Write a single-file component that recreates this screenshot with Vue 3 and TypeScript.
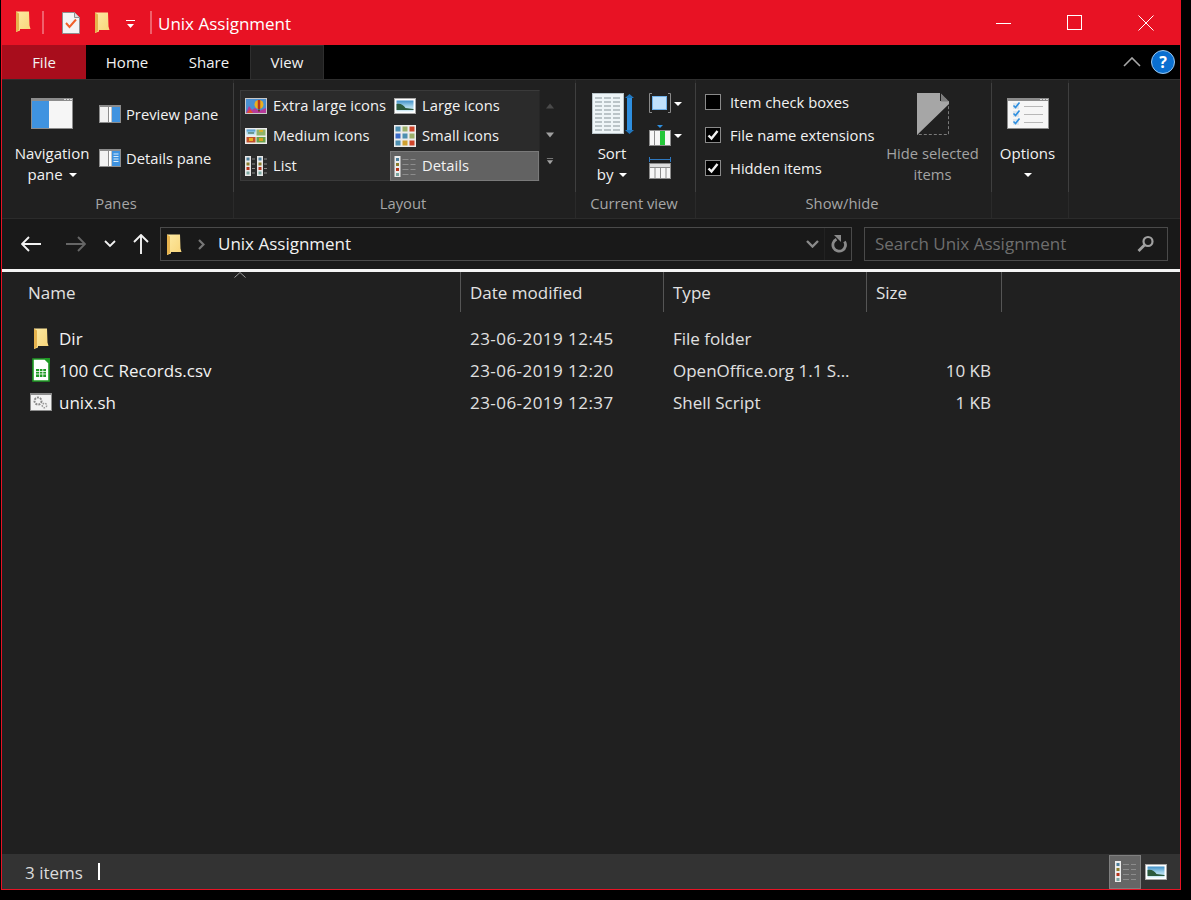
<template>
  <div class="window">
    <svg class="defs" aria-hidden="true">
      <defs>
        <linearGradient id="folder-fill" x1="0" y1="0" x2="1" y2="1">
          <stop offset="0" stop-color="#fdeaa4" />
          <stop offset="1" stop-color="#f8d477" />
        </linearGradient>
        <linearGradient id="sky" x1="0" y1="0" x2="0" y2="1">
          <stop offset="0" stop-color="#3f8fc8" />
          <stop offset="0.5" stop-color="#9fd0e8" />
          <stop offset="1" stop-color="#d8eef7" />
        </linearGradient>
      </defs>
      <symbol id="i-folder" viewBox="0 0 15 21">
        <path d="M0 0.500h13l.5 14 1 3.500H4v1.500L0 21z" fill="url(#folder-fill)" />
        <path d="M0 0.500l3 2V19l-3 2z" fill="#e6b34e" />
      </symbol>
      <symbol id="i-details" viewBox="0 0 21 21">
        <rect x="0" y="0" width="6" height="21" fill="#ececec" />
        <rect x="1.500" y="2" width="3" height="3" fill="#4d7f9b" />
        <rect x="1.500" y="7" width="3" height="3" fill="#8a7d2b" />
        <rect x="1.500" y="12" width="3" height="3" fill="#b5341c" />
        <rect x="1.500" y="17" width="3" height="3" fill="#7aa6a0" />
        <path d="M8 3.500h6M16 3.500h5M8 8.500h6M16 8.500h5M8 13.500h6M16 13.500h5M8 18.500h6M16 18.500h5" stroke="#8c8c8c" />
      </symbol>
      <symbol id="i-list" viewBox="0 0 22 20">
        <rect x="0" y="0" width="6" height="20" fill="#e8e8e8" />
        <rect x="12" y="0" width="6" height="20" fill="#e8e8e8" />
        <path d="M1.500 1.500h3v3h-3zM13.500 1.500h3v3h-3z" fill="#4d7f9b" />
        <path d="M1.500 6.500h3v3h-3zM13.500 6.500h3v3h-3z" fill="#8a7d2b" />
        <path d="M1.500 11h3v3h-3zM13.500 11h3v3h-3z" fill="#b5341c" />
        <path d="M1.500 15.500h3v3h-3zM13.500 15.500h3v3h-3z" fill="#7aa6a0" />
        <path d="M7 3h3M19 3h3M7 8h3M19 8h3M7 12.500h3M19 12.500h3M7 17h3M19 17h3" stroke="#8c8c8c" />
      </symbol>
      <symbol id="i-xl" viewBox="0 0 22 16">
        <rect width="22" height="16" fill="#c8c8c8" />
        <rect x="1" y="1" width="20" height="14" fill="#4a8fd0" />
        <path d="M1 15l3-7 3 4 3-2 4 3 7-3v5z" fill="#b63a9a" />
        <path d="M2 15l3-4 3 4z" fill="#e0502a" />
        <circle cx="14" cy="6.500" r="4.500" fill="#e8b020" />
        <path d="M14 2v9" stroke="#b5341c" stroke-width="2.500" />
        <rect x="13" y="11.500" width="2" height="2" fill="#6a3a1a" />
      </symbol>
      <symbol id="i-large" viewBox="0 0 22 16">
        <rect width="22" height="16" fill="#a8a8a8" />
        <rect x="1" y="1" width="20" height="14" fill="#fff" />
        <rect x="2.500" y="2.500" width="17" height="11" fill="url(#sky)" />
        <path d="M2.500 6c4-1 7 1 9 4l8 1v1H2.500z" fill="#2c5a3c" />
      </symbol>
      <symbol id="i-medium" viewBox="0 0 22 16">
        <rect width="22" height="16" fill="#ececec" />
        <rect x="1.500" y="1.500" width="9" height="6" fill="url(#sky)" />
        <rect x="11.500" y="1.500" width="9" height="6" fill="#8fb36a" />
        <path d="M3 5h6" stroke="#2c5a3c" />
        <path d="M14 3h4" stroke="#d8b030" stroke-width="2" />
        <rect x="1.500" y="9" width="9" height="5.500" fill="#c0502a" />
        <rect x="4" y="10" width="4" height="3" fill="#e8b020" />
        <rect x="11.500" y="9" width="9" height="5.500" fill="#6ba04a" />
        <rect x="14" y="10" width="4" height="3" fill="#d8a020" />
      </symbol>
      <symbol id="i-small" viewBox="0 0 22 22">
        <rect width="22" height="22" fill="#ececec" />
        <path d="M1.500 1.500h5v5h-5z" fill="#4d8fb0" /><path d="M8.500 1.500h5v5h-5z" fill="#9bb06a" /><path d="M15.500 1.500h5v5h-5z" fill="#d0452a" />
        <path d="M1.500 8.500h5v5h-5z" fill="#3a6ac8" /><path d="M8.500 8.500h5v5h-5z" fill="#4d8fb0" /><path d="M15.500 8.500h5v5h-5z" fill="#9bb06a" />
        <path d="M1.500 15.500h5v5h-5z" fill="#4d8fb0" /><path d="M8.500 15.500h5v5h-5z" fill="#d0a030" /><path d="M15.500 15.500h5v5h-5z" fill="#d0452a" />
      </symbol>
      <symbol id="i-preview" viewBox="0 0 22 18">
        <rect width="22" height="18" fill="#8c8c8c" />
        <rect x="1" y="2" width="8" height="15" fill="#f2f2f2" />
        <rect x="10" y="2" width="2.500" height="15" fill="#ffffff" />
        <rect x="13" y="2" width="8" height="15" fill="#3f93e0" />
      </symbol>
      <symbol id="i-detailspane" viewBox="0 0 22 18">
        <rect width="22" height="18" fill="#8c8c8c" />
        <rect x="1" y="2" width="8" height="15" fill="#f2f2f2" />
        <rect x="10" y="2" width="2.500" height="15" fill="#ffffff" />
        <rect x="13" y="2" width="8" height="15" fill="#3f93e0" />
        <path d="M14.500 5h5M14.500 7.500h5M14.500 10h5M14.500 12.500h5" stroke="#d8ecfb" />
      </symbol>
    </svg>

    <header class="titlebar">
      <svg class="qa-folder"><use href="#i-folder" /></svg>
      <span class="qa-sep"></span>
      <svg class="qa-doc" viewBox="0 0 18 22">
        <path d="M0.500 0.500h12l5 5v16H0.500z" fill="#f4f4f4" stroke="#8f8f8f" />
        <path d="M12.500 0.500v5h5" fill="#dcdcdc" stroke="#8f8f8f" />
        <path d="M4 11l3.500 4L14 7.500" fill="none" stroke="#f0602a" stroke-width="2" />
      </svg>
      <svg class="qa-folder second"><use href="#i-folder" /></svg>
      <svg class="qa-drop" viewBox="0 0 11 10">
        <path d="M1 .500h9" stroke="#fff" />
        <path d="M2 4h7l-3.500 4z" fill="#fff" />
      </svg>
      <span class="qa-sep last"></span>
      <span class="title">Unix Assignment</span>
      <div class="controls">
        <svg class="ctl" viewBox="0 0 16 16"><path d="M0 8.500h15" stroke="#fff" /></svg>
        <svg class="ctl" viewBox="0 0 16 16"><rect x="0.500" y="0.500" width="14" height="14" fill="none" stroke="#fff" /></svg>
        <svg class="ctl" viewBox="0 0 16 16"><path d="M0.500 0.500l15 15M15.500 0.500l-15 15" stroke="#fff" /></svg>
      </div>
    </header>

    <nav class="tabs">
      <span class="tab file">File</span>
      <span class="tab">Home</span>
      <span class="tab">Share</span>
      <span class="tab view">View</span>
      <svg class="collapse" viewBox="0 0 18 10"><path d="M1 9l8-8 8 8" fill="none" stroke="#a8a8a8" stroke-width="1.600" /></svg>
      <span class="help">?</span>
    </nav>

    <section class="ribbon">
      <div class="group panes">
        <div class="group-body">
          <div class="big nav-pane">
            <svg class="big-icon wide" viewBox="0 0 42 31">
              <rect width="42" height="31" fill="#8c8c8c" />
              <rect x="1" y="3" width="17" height="27" fill="#3f93e0" />
              <rect x="18" y="3" width="23" height="27" fill="#f6f6f6" />
              <path d="M33 1.500h2M36 1.500h2M39 1.500h2" stroke="#dcdcdc" />
            </svg>
            <span class="big-text">Navigation<br />pane <i class="caret"></i></span>
          </div>
          <div class="pane-list">
            <div class="pane-item"><svg class="pane-icon"><use href="#i-preview" /></svg>Preview pane</div>
            <div class="pane-item"><svg class="pane-icon"><use href="#i-detailspane" /></svg>Details pane</div>
          </div>
        </div>
        <div class="group-label">Panes</div>
      </div>

      <div class="group layout">
        <div class="group-body">
          <div class="gallery">
            <div v-for="item in layouts" :key="item.label" class="gallery-item" :class="{ selected: item.selected }">
              <svg class="gallery-icon" :style="{ height: `${item.h}px` }"><use :href="`#i-${item.icon}`" /></svg>
              <span class="gallery-text">{{ item.label }}</span>
            </div>
          </div>
          <div class="gallery-scroll">
            <svg viewBox="0 0 10 6"><path d="M1 6l4-5 4 5z" fill="#4a4a4a" /></svg>
            <svg viewBox="0 0 10 6"><path d="M1 0l4 5 4-5z" fill="#a0a0a0" /></svg>
            <svg class="more" viewBox="0 0 10 9"><path d="M1 .500h8" stroke="#a0a0a0" /><path d="M1 3l4 5 4-5z" fill="#a0a0a0" /></svg>
          </div>
        </div>
        <div class="group-label">Layout</div>
      </div>

      <div class="group current">
        <div class="group-body">
          <div class="big sort">
            <svg class="big-icon sort-icon" viewBox="0 0 42 42">
              <rect x="0.500" y="0.500" width="31" height="40" fill="#eef5f8" stroke="#b9c4c9" />
              <path d="M3 5h26M3 9h26M3 13h26M3 17h26M3 21h26M3 25h26M3 29h26M3 33h26M3 37h26" stroke="#a9b4b8" stroke-width="1.400" stroke-dasharray="7 2" />
              <rect x="35" y="3" width="5" height="36" fill="#2e8fe0" />
              <path d="M33 5l4.500-4 4.500 4zM33 37l4.500 4 4.500-4z" fill="#2176bd" />
            </svg>
            <span class="big-text">Sort<br />by <i class="caret"></i></span>
          </div>
          <div class="view-tools">
            <div class="tool">
              <svg class="tool-icon" viewBox="0 0 22 22">
                <path d="M3 .500H.500v19H3M19 .500h2.500v19H19" fill="none" stroke="#8a8a8a" />
                <rect x="3.500" y="3.500" width="14" height="13" fill="#bfe0fb" stroke="#6fb0e8" />
              </svg>
              <i class="caret"></i>
            </div>
            <div class="tool">
              <svg class="tool-icon" viewBox="0 0 22 22">
                <path d="M8 0h6l-3 3z" fill="#2e8fe0" />
                <rect y="5" width="22" height="16" fill="#8c8c8c" />
                <rect x="1" y="6" width="20" height="14" fill="#f6f6f6" />
                <path d="M5.500 6v14" stroke="#8c8c8c" />
                <rect x="11" y="6" width="5" height="14" fill="#25c73a" />
              </svg>
              <i class="caret"></i>
            </div>
            <div class="tool">
              <svg class="tool-icon" viewBox="0 0 22 22">
                <path d="M.500 0v5M21.500 0v5M1 2.500h20" stroke="#2e78c0" />
                <rect y="6" width="22" height="16" fill="#8c8c8c" />
                <rect x="1" y="7" width="20" height="3" fill="#dedede" />
                <path d="M1 11h4.500v10H1zM6.500 11H11v10H6.500zM12 11h4.500v10H12zM17.500 11H21v10h-3.500z" fill="#f6f6f6" />
              </svg>
            </div>
          </div>
        </div>
        <div class="group-label">Current view</div>
      </div>

      <div class="group showhide">
        <div class="group-body">
          <div class="checks">
            <label v-for="item in checks" :key="item.label" class="check">
              <span class="box">
                <svg v-if="item.on" viewBox="0 0 14 14"><path d="M2.500 7.500l3 3 6-7.500" fill="none" stroke="#f0f0f0" stroke-width="2.400" /></svg>
              </span>
              {{ item.label }}
            </label>
          </div>
          <div class="big hide">
            <svg class="big-icon hide-icon" viewBox="0 0 32 42">
              <path d="M0.500 41.500V.500h23l8 8v33z" fill="none" stroke="#7a7a7a" stroke-dasharray="3 2" />
              <path d="M0 42V0h23v8h9v3z" fill="#a6a6a6" />
              <path d="M24 0.500l8 8h-8z" fill="#7d7d7d" />
            </svg>
            <span class="big-text muted">Hide selected<br />items</span>
          </div>
        </div>
        <div class="group-label">Show/hide</div>
      </div>

      <div class="group options">
        <div class="group-body">
          <div class="big">
            <svg class="big-icon wide" viewBox="0 0 42 31">
              <rect width="42" height="31" fill="#8c8c8c" />
              <rect x="1" y="3" width="40" height="27" fill="#f6f6f6" />
              <path d="M33 1.500h2M36 1.500h2M39 1.500h2" stroke="#dcdcdc" />
              <path d="M6 5h6v6H6zM6 13h6v6H6zM6 21h6v6H6z" fill="#dfe6ec" />
              <path d="M6.500 7.500l2 2 4-5M6.500 15.500l2 2 4-5M6.500 23.500l2 2 4-5" fill="none" stroke="#2f8fe0" stroke-width="1.600" />
              <path d="M17 8.500h19M17 16.500h19M17 24.500h19" stroke="#b8b8b8" />
            </svg>
            <span class="big-text">Options<br /><i class="caret"></i></span>
          </div>
        </div>
        <div class="group-label"></div>
      </div>
    </section>

    <div class="navbar">
      <svg class="nav-btn back" viewBox="0 0 20 16"><path d="M20 8H1M8 1L1 8l7 7" fill="none" stroke="#f2f2f2" stroke-width="1.900" /></svg>
      <svg class="nav-btn forward" viewBox="0 0 20 16"><path d="M0 8h19M12 1l7 7-7 7" fill="none" stroke="#666" stroke-width="1.900" /></svg>
      <svg class="nav-chev" viewBox="0 0 12 8"><path d="M1 1l5 5 5-5" fill="none" stroke="#f2f2f2" stroke-width="1.800" /></svg>
      <svg class="nav-up" viewBox="0 0 16 20"><path d="M8 20V1M1 8l7-7 7 7" fill="none" stroke="#f2f2f2" stroke-width="1.900" /></svg>
      <div class="address">
        <svg class="addr-folder"><use href="#i-folder" /></svg>
        <svg class="addr-chev" viewBox="0 0 7 11"><path d="M1 1l4.500 4.500L1 10" fill="none" stroke="#777" stroke-width="2.200" /></svg>
        <span class="addr-text">Unix Assignment</span>
        <svg class="addr-drop" viewBox="0 0 13 8"><path d="M1 1l5.500 5.500L12 1" fill="none" stroke="#8a8a8a" stroke-width="2.400" /></svg>
        <span class="addr-split"></span>
        <svg class="addr-refresh" viewBox="0 0 18 18"><path d="M6.500 4.200a6.300 6.300 0 1 0 8 2.300" fill="none" stroke="#8a8a8a" stroke-width="2.800" /><path d="M4 0h7v7z" fill="#8a8a8a" /></svg>
      </div>
      <div class="search">
        <span class="search-text">Search Unix Assignment</span>
        <svg class="search-icon" viewBox="0 0 18 18"><circle cx="11" cy="6.500" r="4.500" fill="none" stroke="#a0a0a0" stroke-width="2.200" /><path d="M7.500 10l-6 6" stroke="#a0a0a0" stroke-width="2.800" /></svg>
      </div>
    </div>

    <main class="files">
      <div class="file-header">
        <div class="col-head name-head">Name<svg class="sort-caret" viewBox="0 0 12 6"><path d="M.500 5.500L6 .500l5.500 5" fill="none" stroke="#9a9a9a" /></svg></div>
        <div class="col-head">Date modified</div>
        <div class="col-head">Type</div>
        <div class="col-head">Size</div>
      </div>
      <div class="file-rows">
        <div v-for="row in files" :key="row.name" class="file-row">
          <div class="cell name-cell">
            <span class="file-icon">
              <svg v-if="row.kind === 'folder'" class="row-folder"><use href="#i-folder" /></svg>
              <svg v-else-if="row.kind === 'sheet'" class="row-sheet" viewBox="0 0 18 24">
                <path d="M1 1h12l4 4v18H1z" fill="#fff" stroke="#1f9b24" stroke-width="1.600" />
                <path d="M12 0h6v6z" fill="#1f9b24" />
                <path d="M4 11h10v8H4z" fill="#1f9b24" />
                <path d="M4 13.500h10M4 16h10M7.500 11v8M10.800 11v8" stroke="#fff" stroke-width=".8" />
              </svg>
              <svg v-else class="row-script" viewBox="0 0 22 18">
                <rect width="22" height="18" fill="#8c8c8c" />
                <rect x="1" y="2" width="20" height="15" fill="#f2f2f2" />
                <circle cx="8" cy="8" r="3.500" fill="none" stroke="#8a8a8a" stroke-width="2" stroke-dasharray="2 1" />
                <circle cx="14.500" cy="12.500" r="2.200" fill="none" stroke="#9a9a9a" stroke-width="1.500" stroke-dasharray="1.500 1" />
              </svg>
            </span>
            {{ row.name }}
          </div>
          <div class="cell date">{{ row.date }}</div>
          <div class="cell">{{ row.type }}</div>
          <div class="cell size">{{ row.size }}</div>
        </div>
      </div>
    </main>

    <footer class="statusbar">
      <span class="count">3 items</span>
      <span class="cursor"></span>
      <span class="view-toggle active"><svg><use href="#i-details" /></svg></span>
      <svg class="thumb-toggle"><use href="#i-large" /></svg>
    </footer>
  </div>
</template>

<script setup lang="ts">
interface FileRow {
  name: string;
  date: string;
  type: string;
  size: string;
  kind: 'folder' | 'sheet' | 'script';
}

const layouts = [
  { label: 'Extra large icons', icon: 'xl', h: 16 },
  { label: 'Large icons', icon: 'large', h: 16 },
  { label: 'Medium icons', icon: 'medium', h: 16 },
  { label: 'Small icons', icon: 'small', h: 22 },
  { label: 'List', icon: 'list', h: 20 },
  { label: 'Details', icon: 'details', h: 21, selected: true },
];

const checks = [
  { label: 'Item check boxes', on: false },
  { label: 'File name extensions', on: true },
  { label: 'Hidden items', on: true },
];

const files: FileRow[] = [
  { name: 'Dir', date: '23-06-2019 12:45', type: 'File folder', size: '', kind: 'folder' },
  { name: '100 CC Records.csv', date: '23-06-2019 12:20', type: 'OpenOffice.org 1.1 S...', size: '10 KB', kind: 'sheet' },
  { name: 'unix.sh', date: '23-06-2019 12:37', type: 'Shell Script', size: '1 KB', kind: 'script' },
];
</script>

<style>
html,
body {
  background: #000;
}
</style>

<style scoped>
.window {
  box-sizing: border-box;
  width: 1180px;
  height: 890px;
  margin-left: 1px;
  border-left: 1px solid #e81224;
  border-right: 1px solid #e81224;
  border-bottom: 1px solid #e81224;
  display: flex;
  flex-direction: column;
  background: #202020;
  color: #f2f2f2;
  font-family: "Open Sans", "Noto Sans", sans-serif;
  font-size: 14.750px;
  overflow: hidden;
}

.defs {
  position: absolute;
  width: 0;
  height: 0;
}

svg {
  display: block;
  flex: none;
}

/* title bar */
.titlebar {
  height: 45px;
  flex: none;
  display: flex;
  align-items: center;
  padding-left: 14px;
  background: #e81224;
  color: #fff;
}

.qa-folder {
  width: 15px;
  height: 21px;
  margin-bottom: 2px;
}

.qa-folder.second {
  margin-left: 15px;
  margin-bottom: 0;
}

.qa-sep {
  width: 2px;
  height: 23px;
  margin-left: 11px;
  background: #f0606c;
}

.qa-sep.last {
  margin-left: 14px;
}

.qa-doc {
  width: 18px;
  height: 22px;
  margin-left: 18px;
}

.qa-drop {
  width: 11px;
  height: 10px;
  margin-left: 15px;
  margin-top: 4px;
}

.title {
  margin-left: 6px;
  padding-top: 1px;
  font-size: 17px;
}

.controls {
  margin-left: auto;
  margin-right: 26px;
  display: flex;
  gap: 55px;
}

.ctl {
  width: 16px;
  height: 16px;
}

/* tabs */
.tabs {
  height: 34px;
  flex: none;
  display: flex;
  align-items: center;
  background: #000;
  font-size: 15px;
}

.tab {
  width: 82px;
  height: 100%;
  display: flex;
  align-items: center;
  justify-content: center;
}

.tab.file {
  width: 84px;
  background: #a80d1c;
}

.tab.view {
  box-sizing: border-box;
  width: 74px;
  padding-bottom: 1px;
  background: #202020;
  border: 1px solid #2e2e2e;
  border-bottom: 0;
}

.collapse {
  width: 18px;
  height: 10px;
  margin-left: auto;
}

.help {
  width: 22px;
  height: 22px;
  margin: 0 5px 0 10px;
  border: 1px solid #9cc8ee;
  border-radius: 50%;
  background: #0a6fd0;
  color: #fff;
  font-weight: 700;
  font-size: 16px;
  line-height: 22px;
  text-align: center;
}

/* ribbon */
.ribbon {
  height: 140px;
  flex: none;
  display: flex;
  box-sizing: border-box;
  border-top: 1px solid #2e2e2e;
  border-bottom: 1px solid #2b2b2b;
  background: #202020;
}

.group {
  position: relative;
  display: flex;
  flex-direction: column;
  flex: none;
  border-right: 1px solid #2a2a2a;
  box-sizing: border-box;
}

.group::after {
  content: "";
  position: absolute;
  top: 3px;
  right: -1px;
  width: 1px;
  height: 109px;
  background: #3f3f3f;
}

.group-body {
  box-sizing: border-box;
  height: 112px;
  display: flex;
}

.group-label {
  flex: 1;
  display: flex;
  align-items: center;
  justify-content: center;
  color: #a6a6a6;
  font-size: 14.750px;
  padding: 0 3px 5px 0;
}

.panes { width: 232px; }
.layout { width: 342px; }
.current { width: 120px; }
.showhide { width: 296px; }
.options { width: 77px; }

.big {
  display: flex;
  flex-direction: column;
  align-items: center;
}

.big-text {
  text-align: center;
  line-height: 21px;
  font-size: 15px;
  white-space: nowrap;
}

.big-text.muted {
  color: #a3a3a3;
  font-size: 14.750px;
}

.big-icon.wide {
  width: 42px;
  height: 31px;
  margin: 18px 0 14px;
}

.caret {
  display: inline-block;
  width: 0;
  height: 0;
  margin-left: 2px;
  vertical-align: 3px;
  border-left: 4px solid transparent;
  border-right: 4px solid transparent;
  border-top: 4px solid #fff;
}

.nav-pane {
  width: 100px;
}

.pane-list {
  display: flex;
  flex-direction: column;
  gap: 24px;
  margin: 24px 0 0 -3px;
}

.pane-item {
  height: 20px;
  display: flex;
  align-items: center;
  gap: 5px;
  white-space: nowrap;
}

.pane-icon {
  width: 22px;
  height: 18px;
}

.layout .group-body {
  padding: 10px 0 0 6px;
}

.gallery {
  box-sizing: border-box;
  width: 300px;
  height: 91px;
  display: grid;
  grid-template-columns: 149px 149px;
  grid-auto-rows: 30px;
  background: #2b2b2b;
  border: 1px solid #3a3a3a;
  border-right-color: #262626;
}

.gallery-item {
  box-sizing: border-box;
  display: flex;
  align-items: center;
  gap: 6px;
  padding-left: 4px;
  white-space: nowrap;
}

.gallery-item.selected {
  background: #626262;
  border: 1px solid #7a7a7a;
  padding-left: 3px;
}

.gallery-icon {
  width: 22px;
}

.gallery-text {
  margin-bottom: 2px;
}

.gallery-scroll {
  width: 20px;
  height: 91px;
  display: flex;
  flex-direction: column;
  align-items: center;
  gap: 23px;
  padding-top: 12px;
  box-sizing: border-box;
}

.gallery-scroll svg {
  width: 10px;
  height: 7px;
}

.gallery-scroll .more {
  margin-top: -4px;
}

.current .group-body {
  padding-left: 16px;
  gap: 15px;
}

.sort {
  width: 42px;
}

.sort-icon {
  width: 42px;
  height: 42px;
  margin: 13px 0 8px;
}

.sort .big-text {
  margin-left: -2px;
}

.view-tools {
  display: flex;
  flex-direction: column;
  gap: 10px;
  padding-top: 13px;
}

.tool {
  height: 22px;
  display: flex;
  align-items: center;
  gap: 1px;
}

.tool-icon {
  width: 22px;
  height: 22px;
}

.showhide .group-body {
  padding-left: 9px;
}

.checks {
  width: 180px;
  display: flex;
  flex-direction: column;
  gap: 13px;
  padding-top: 12px;
}

.check {
  height: 20px;
  display: flex;
  align-items: center;
  gap: 9px;
  white-space: nowrap;
}

.box {
  box-sizing: border-box;
  width: 16px;
  height: 16px;
  border: 1px solid #8a8a8a;
  background: #000;
}

.box svg {
  width: 14px;
  height: 14px;
}

.hide {
  width: 95px;
}

.hide-icon {
  width: 32px;
  height: 42px;
  margin: 13px 0 8px;
}

.options .big {
  width: 71px;
}

/* address row */
.navbar {
  height: 50px;
  flex: none;
  display: flex;
  align-items: center;
  padding-left: 19px;
  background: #191919;
}

.nav-btn {
  width: 20px;
  height: 16px;
}

.nav-btn.forward {
  margin-left: 25px;
}

.nav-chev {
  width: 12px;
  height: 8px;
  margin-left: 18px;
}

.nav-up {
  width: 16px;
  height: 20px;
  margin-left: 17px;
}

.address {
  box-sizing: border-box;
  width: 692px;
  height: 34px;
  margin-left: 11px;
  display: flex;
  align-items: center;
  padding-left: 6px;
  border: 1px solid #4a4a4a;
}

.addr-folder {
  width: 15px;
  height: 21px;
}

.addr-chev {
  width: 7px;
  height: 11px;
  margin-left: 16px;
}

.addr-text {
  margin-left: 13px;
  padding-bottom: 2px;
  font-size: 17px;
}

.addr-drop {
  width: 13px;
  height: 8px;
  margin-left: auto;
}

.addr-split {
  width: 1px;
  height: 32px;
  margin-left: 5px;
  background: #222;
}

.addr-refresh {
  width: 18px;
  height: 18px;
  margin: 0 3px 0 5px;
}

.search {
  box-sizing: border-box;
  width: 304px;
  height: 34px;
  margin-left: 12px;
  display: flex;
  align-items: center;
  justify-content: space-between;
  padding: 0 12px 0 10px;
  border: 1px solid #4a4a4a;
  color: #6e6e6e;
  font-size: 17px;
}

.search-text {
  padding-bottom: 2px;
}

.search-icon {
  width: 18px;
  height: 18px;
}

/* file list */
.files {
  flex: 1;
  min-height: 0;
  border-top: 3px solid #f4f4f4;
  background: #202020;
}

.file-header,
.file-row {
  display: grid;
  grid-template-columns: 459px 203px 203px 135px;
}

.file-header {
  height: 40px;
}

.col-head {
  position: relative;
  display: flex;
  align-items: center;
  padding-left: 9px;
  border-right: 1px solid #555;
  color: #e2e2e2;
  font-size: 17px;
}

.name-head {
  padding-left: 26px;
}

.sort-caret {
  position: absolute;
  top: 0;
  left: 232px;
  width: 12px;
  height: 6px;
}

.file-rows {
  padding-top: 11px;
}

.file-row {
  height: 32px;
}

.cell {
  display: flex;
  align-items: center;
  padding-left: 9px;
  padding-bottom: 2px;
  white-space: nowrap;
  font-size: 17px;
  color: #e0e0e0;
}

.cell.date {
  letter-spacing: 0.450px;
}

.name-cell {
  padding-left: 23px;
  color: #f2f2f2;
}

.file-icon {
  width: 32px;
  margin-right: 2px;
  display: flex;
  justify-content: center;
}

.row-folder {
  width: 15px;
  height: 21px;
}

.row-sheet {
  width: 18px;
  height: 24px;
}

.row-script {
  width: 22px;
  height: 18px;
}

.size {
  justify-content: flex-end;
  padding-right: 11px;
}

/* status bar */
.statusbar {
  height: 35px;
  flex: none;
  display: flex;
  align-items: center;
  padding-left: 23px;
  background: #333;
  font-size: 17px;
  color: #dcdcdc;
}

.count {
  padding-top: 2px;
}

.cursor {
  width: 2px;
  height: 17px;
  margin-left: 15px;
  background: #fff;
}

.view-toggle {
  box-sizing: border-box;
  width: 32px;
  height: 34px;
  margin-left: auto;
  display: flex;
  align-items: center;
  justify-content: center;
  background: #666;
  border: 1px solid #808080;
}

.view-toggle svg {
  width: 21px;
  height: 21px;
}

.thumb-toggle {
  width: 22px;
  height: 16px;
  margin: 0 13px 0 4px;
}
</style>
